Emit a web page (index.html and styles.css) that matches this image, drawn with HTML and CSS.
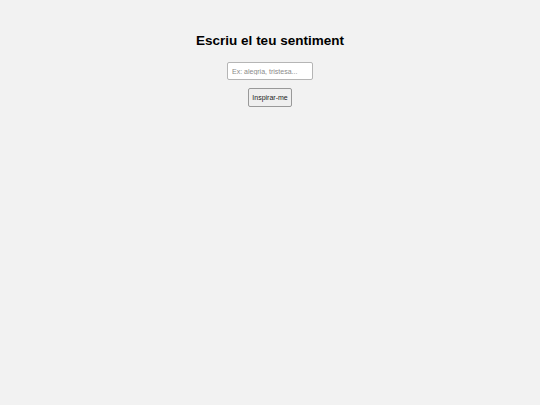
FILE: index.html
```html
<!DOCTYPE html>
<html lang="ca">
<head>
<meta charset="utf-8">
<title>Sentiment</title>
<link rel="stylesheet" href="styles.css">
</head>
<body>
<main class="page">
  <h1 class="title">Escriu el teu sentiment</h1>
  <input class="field" type="text" placeholder="Ex: alegria, tristesa...">
  <button class="btn" type="button">Inspirar-me</button>
</main>
</body>
</html>
```
FILE: styles.css
```css
html, body {
  margin: 0;
  padding: 0;
  background: #f2f2f2;
}
body {
  font-family: "Liberation Sans", Arial, sans-serif;
}
.page {
  display: flex;
  flex-direction: column;
  align-items: center;
  padding-top: 32px;
}
.title {
  margin: 0;
  font-size: 13.5px;
  line-height: 18px;
  font-weight: bold;
  color: #000;
}
.field {
  margin-top: 12px;
  box-sizing: border-box;
  width: 86px;
  height: 18px;
  padding: 0 4px;
  font-family: "Liberation Sans", Arial, sans-serif;
  font-size: 7px;
  border: 1px solid #b5b5b5;
  border-radius: 2px;
  background: #fff;
}
.field::placeholder {
  color: #8a8a8a;
}
.btn {
  margin-top: 8px;
  box-sizing: border-box;
  width: 44px;
  height: 19px;
  padding: 0;
  font-family: "Liberation Sans", Arial, sans-serif;
  font-size: 7px;
  font-weight: normal;
  color: #222;
  background: #efefef;
  border: 1px solid #999;
  border-radius: 2px;
}
```
